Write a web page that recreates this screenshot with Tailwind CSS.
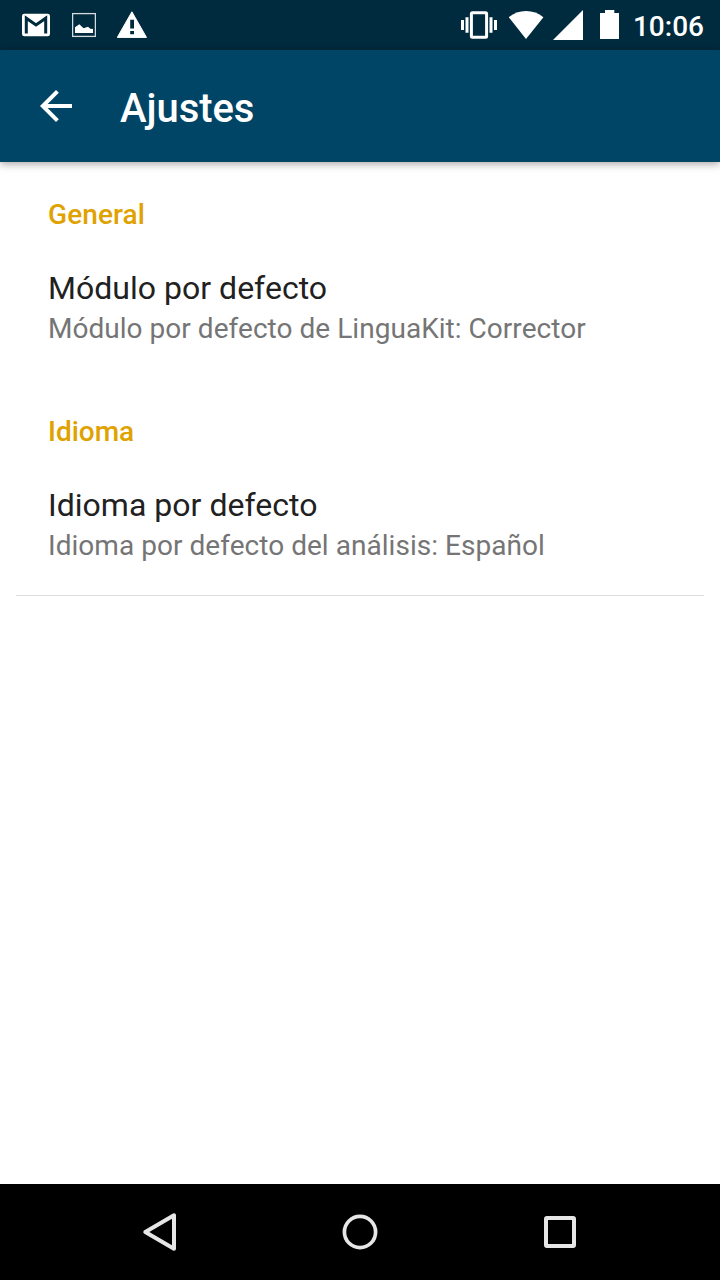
<!DOCTYPE html>
<html lang="es">
<head>
<meta charset="utf-8">
<title>Ajustes</title>
<script src="https://cdn.jsdelivr.net/npm/@tailwindcss/browser@4"></script>
</head>
<body class="w-[720px] h-[1280px] overflow-hidden bg-white flex flex-col font-['Roboto',sans-serif]">
  <div class="h-[50px] shrink-0 bg-[#002a3d] flex items-center justify-between text-white pl-[22px] pr-4">
    <div class="flex gap-[22px]">
      <svg class="w-7 h-[50px]" viewBox="22 0 28 50"><rect x="22" y="13.700" width="28" height="22.600" rx="2.400" fill="#fff"/><path d="M26.300 33.600V18.200L36 25l9.700-6.800v15.400" fill="none" stroke="#002a3d" stroke-width="3"/></svg>
      <svg class="w-6 h-[50px]" viewBox="72 0 24 50"><rect x="72.600" y="13.600" width="22.800" height="22.800" fill="none" stroke="#d5dcdf" stroke-width="1.300"/><path d="M75 33V27.300L79.300 24.300L83.600 28.300L88 26.700L90.300 28.700L93 29V33z" fill="#fff"/></svg>
      <svg class="w-[31px] h-[50px] -ml-px" viewBox="117 0 31 50"><path fill="#fff" stroke="#fff" stroke-linejoin="round" d="M131.900 11.800L146.500 37.400H117.300z"/><path fill="#002a3d" d="M130.200 19.700h3.800v8.800h-3.800zM130.200 31h3.800v3.300h-3.800z"/></svg>
    </div>
    <div class="flex items-center">
      <svg class="w-9 h-[50px] mr-3" viewBox="461 0 36 50" fill="#fff"><rect x="471.400" y="12.700" width="15.200" height="24.600" rx="1" fill="none" stroke="#fff" stroke-width="3"/><path d="M461 20h3v10h-3zM494 20h3v10h-3zM465.500 17.300h3v15.400h-3zM489.500 17.300h3v15.400h-3z"/></svg>
      <svg class="w-[35px] h-[50px] mr-[9px]" viewBox="509 0 35 50"><path fill="#fff" d="M508.800 17.200Q516 11 526 11T543.400 17.200L526 39z"/></svg>
      <svg class="w-[30px] h-[50px] mr-[17px]" viewBox="553 0 30 50"><path fill="#fff" d="M553 40L583 10V40z"/></svg>
      <svg class="w-[19px] h-[50px] mr-[14px]" viewBox="600 0 19 50"><path fill="#fff" d="M605 10h9.300v3H619v26H600V13h5z"/></svg>
      <span class="text-[28px] leading-[50px] font-medium h-[50px] pt-[2px]">10:06</span>
    </div>
  </div>
  <header class="relative h-28 shrink-0 bg-[#004466] shadow-[0_2px_8px_rgba(0,0,0,0.36)] flex items-center text-white pl-8">
    <svg class="size-12" viewBox="0 0 24 24"><path fill="#fff" d="M20 11H7.830l5.590-5.590L12 4l-8 8 8 8 1.410-1.410L7.830 13H20v-2z"/></svg>
    <h1 class="ml-10 pt-[6px] text-[40px] leading-[48px] font-medium tracking-[-0.05px]">Ajustes</h1>
  </header>
  <main class="flex-1 pt-9 text-[28px] leading-[33px]">
    <section class="px-12 h-[217px]">
      <h2 class="font-medium text-[#e0a200] tracking-[0.08px]">General</h2>
      <p class="mt-[38px] text-[32px] leading-[38px] text-[#212121] tracking-[0.02px]">Módulo por defecto</p>
      <p class="mt-[5px] text-[#757575] tracking-[0.035px]">Módulo por defecto de LinguaKit: Corrector</p>
    </section>
    <section class="px-12 h-[180px]">
      <h2 class="font-medium text-[#e0a200]">Idioma</h2>
      <p class="mt-[38px] text-[32px] leading-[38px] text-[#212121] tracking-[0.02px]">Idioma por defecto</p>
      <p class="mt-[5px] text-[#757575] tracking-[0.04px]">Idioma por defecto del análisis: Español</p>
    </section>
    <div class="mx-4 h-px bg-[#dedede]"></div>
  </main>
  <nav class="h-24 shrink-0 bg-black flex items-center justify-center gap-[152px]">
    <svg class="size-12" viewBox="136 1208 48 48"><path fill="none" stroke="#e6e6e6" stroke-width="4" stroke-linejoin="round" d="M145.300 1232L174 1215.300V1248.700z"/></svg>
    <svg class="size-12" viewBox="336 1208 48 48"><circle cx="360" cy="1232" r="15.600" fill="none" stroke="#e6e6e6" stroke-width="3.700"/></svg>
    <svg class="size-12" viewBox="536 1208 48 48"><rect x="546" y="1218" width="28" height="28" rx="1" fill="none" stroke="#e6e6e6" stroke-width="4"/></svg>
  </nav>
</body>
</html>
